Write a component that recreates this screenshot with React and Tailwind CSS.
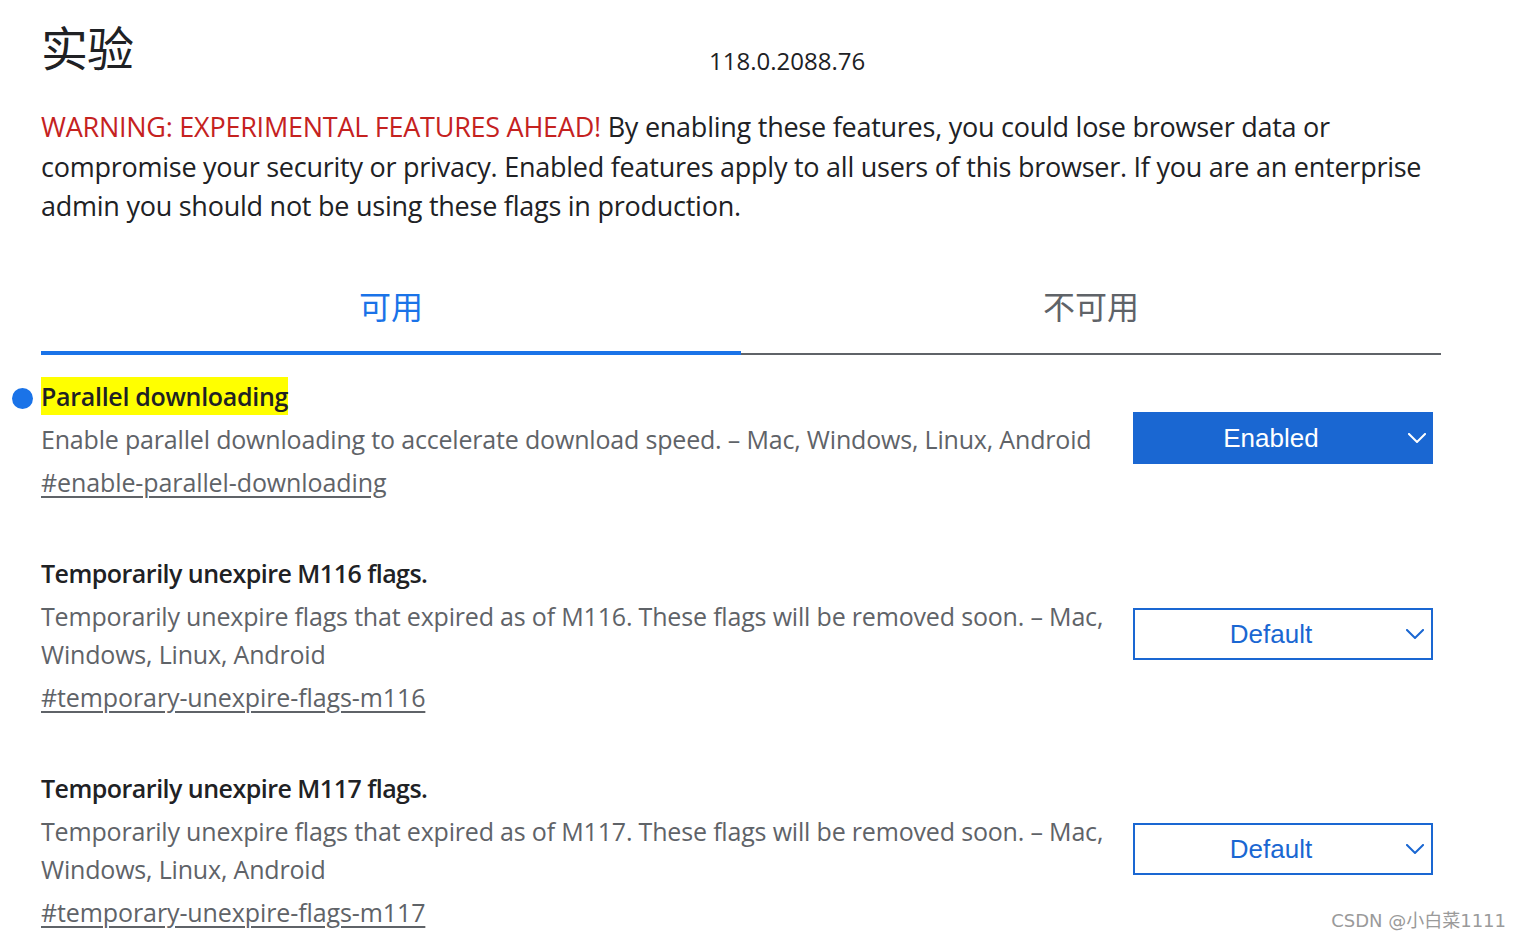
import React from "react";

const Chevron = ({ color }) => (
  <svg width="18" height="10" viewBox="0 0 18 10" fill="none">
    <path d="M1 1 L9 9 L17 1" stroke={color} strokeWidth="2" strokeLinecap="square" />
  </svg>
);

const Select = ({ value, enabled }) => (
  <div
    className={
      "w-[300px] h-[52px] flex items-center relative " +
      (enabled ? "bg-[#1a67d2]" : "bg-white border-2 border-[#1a67d2]")
    }
  >
    <span
      className={
        "flex-1 text-center pr-[24px] text-[26px] leading-none " +
        (enabled ? "text-white" : "text-[#1a67d2]")
      }
      style={{ fontFamily: '"Liberation Sans", Arial, sans-serif' }}
    >
      {value}
    </span>
    <span className="absolute right-[7px] top-1/2 -translate-y-1/2 flex">
      <Chevron color={enabled ? "#ffffff" : "#1a67d2"} />
    </span>
  </div>
);

const Experiment = ({ title, highlight, lines, link, value, enabled, selectTop, dot, titleTrack }) => (
  <div className="flex relative">
    {dot && (
      <span className="absolute left-[-29px] top-[11px] w-[21px] h-[21px] rounded-full bg-[#1a73e8]" />
    )}
    <div className="w-[1080px]">
      <div className="h-[38px] flex items-center">
        <span
          className={
            "text-[25px] font-semibold text-[#202124] leading-[38px] " +
            titleTrack +
            (highlight ? " bg-[#ffff00]" : "")
          }
        >
          {title}
        </span>
      </div>
      <div className="text-[25px] text-[#5f6368] leading-[38px] mt-[5px] tracking-[-0.18px]">
        {lines.map((l, i) => (
          <div key={i} className="whitespace-nowrap">
            {l}
          </div>
        ))}
      </div>
      <div className="text-[25px] text-[#5f6368] leading-[38px] mt-[5px] tracking-[-0.1px] underline underline-offset-[4px] decoration-[1.5px]">
        {link}
      </div>
    </div>
    <div className="ml-[12px]">
      <div className={selectTop}>
        <Select value={value} enabled={enabled} />
      </div>
    </div>
  </div>
);

export default function App() {
  return (
    <div
      className="w-[1521px] h-[938px] bg-white overflow-hidden relative pl-[41px]"
      style={{ fontFamily: '"Open Sans", "Noto Sans CJK SC", sans-serif' }}
    >
      <div className="w-[1400px]">
        <div className="flex items-start pt-[16px] h-[105px]">
          <h1
            className="text-[47px] leading-[60px] font-normal text-[#202124] tracking-[-1px]"
            style={{ fontFamily: '"Noto Sans CJK SC", sans-serif' }}
          >
            实验
          </h1>
          <span className="ml-[576px] mt-[30px] text-[24px] leading-[30px] text-[#202124]">
            118.0.2088.76
          </span>
        </div>
        <div className="mt-[2px] text-[27px] leading-[39.5px] text-[#202124] tracking-[-0.25px]">
          <div className="whitespace-nowrap">
            <span className="text-[#c5221f]">WARNING: EXPERIMENTAL FEATURES AHEAD!</span> By enabling these
            features, you could lose browser data or
          </div>
          <div className="whitespace-nowrap">
            compromise your security or privacy. Enabled features apply to all users of this browser. If you are
            an enterprise
          </div>
          <div className="whitespace-nowrap">admin you should not be using these flags in production.</div>
        </div>

        <div className="mt-[47px] grid grid-cols-2 relative">
          <div
            className="h-[82px] flex items-start justify-center pt-[12px] text-[32px] leading-[40px] text-[#1a73e8] border-b-[4px] border-[#1a73e8] relative z-10"
            style={{ fontFamily: '"Noto Sans CJK SC", sans-serif' }}
          >
            可用
          </div>
          <div
            className="h-[82px] flex items-start justify-center pt-[12px] text-[32px] leading-[40px] text-[#5f6368]"
            style={{ fontFamily: '"Noto Sans CJK SC", sans-serif' }}
          >
            不可用
          </div>
          <div className="absolute left-0 right-0 bottom-[0px] h-[2px] bg-[#5f6368]" />
        </div>

        <div className="mt-[22px]">
          <Experiment
            dot
            highlight
            titleTrack="tracking-[-0.3px]"
            title="Parallel downloading"
            lines={["Enable parallel downloading to accelerate download speed. – Mac, Windows, Linux, Android"]}
            link="#enable-parallel-downloading"
            value="Enabled"
            enabled
            selectTop="mt-[35px]"
          />
          <div className="mt-[53px]">
            <Experiment
              titleTrack="tracking-[-0.52px]"
              title="Temporarily unexpire M116 flags."
              lines={[
                "Temporarily unexpire flags that expired as of M116. These flags will be removed soon. – Mac,",
                "Windows, Linux, Android",
              ]}
              link="#temporary-unexpire-flags-m116"
              value="Default"
              selectTop="mt-[54px]"
            />
          </div>
          <div className="mt-[53px]">
            <Experiment
              titleTrack="tracking-[-0.52px]"
              title="Temporarily unexpire M117 flags."
              lines={[
                "Temporarily unexpire flags that expired as of M117. These flags will be removed soon. – Mac,",
                "Windows, Linux, Android",
              ]}
              link="#temporary-unexpire-flags-m117"
              value="Default"
              selectTop="mt-[54px]"
            />
          </div>
        </div>
      </div>
      <div
        className="absolute right-[15px] bottom-[8px] text-[18px] text-[#9a9a9a] leading-none"
        style={{ fontFamily: '"DejaVu Sans", "Noto Sans CJK SC", sans-serif' }}
      >
        CSDN @小白菜1111
      </div>
    </div>
  );
}
